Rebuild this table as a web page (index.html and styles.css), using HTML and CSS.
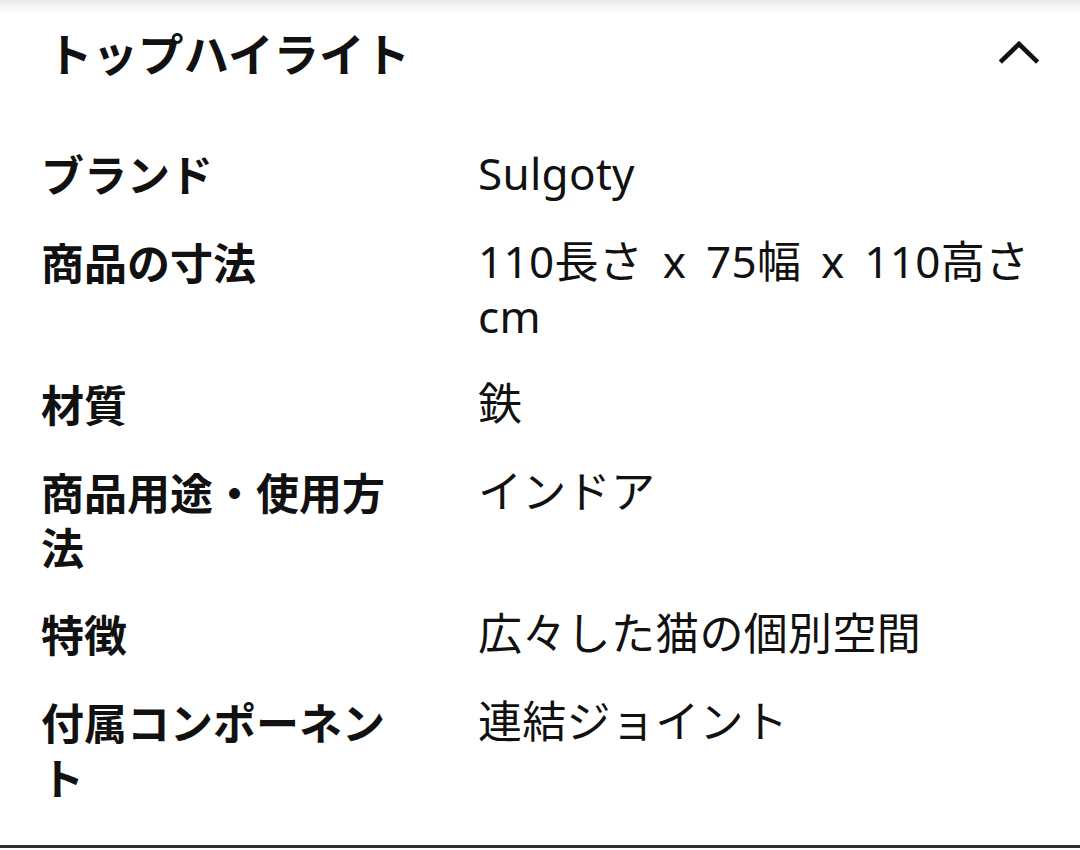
FILE: index.html
```html
<!DOCTYPE html>
<html lang="ja">
<head>
<meta charset="utf-8">
<link rel="stylesheet" href="styles.css">
</head>
<body>
<section class="panel">
  <header class="panel-head">
    <h2 class="panel-title">トップハイライト</h2>
    <svg class="chevron" width="40" height="24" viewBox="0 0 40 24" aria-hidden="true">
      <polyline points="3,19.5 20,3 37,19.5" fill="none" stroke="#111" stroke-width="4.6" stroke-linecap="square" stroke-linejoin="miter"/>
    </svg>
  </header>
  <dl class="specs">
    <dt>ブランド</dt><dd>Sulgoty</dd>
    <dt>商品の寸法</dt><dd>110長さ x 75幅 x 110高さ cm</dd>
    <dt>材質</dt><dd>鉄</dd>
    <dt>商品用途・使用方法</dt><dd>インドア</dd>
    <dt>特徴</dt><dd>広々した猫の個別空間</dd>
    <dt>付属コンポーネント</dt><dd>連結ジョイント</dd>
  </dl>
</section>
</body>
</html>
```

FILE: styles.css
```css
html, body {
  margin: 0;
  padding: 0;
  background: #fff;
}
body {
  width: 1080px;
  height: 850px;
  overflow: hidden;
  font-family: "Noto Sans", "Noto Sans CJK JP", sans-serif;
  color: #111;
  background: linear-gradient(#e8e8e8 0, #f4f4f4 6px, #fcfcfc 12px, #fff 16px);
}
.panel {
  padding: 0 42px 41px 41px;
  border-bottom: 3px solid #2f2f2f;
}
.panel-head {
  height: 106px;
  display: flex;
  align-items: center;
  justify-content: space-between;
}
.panel-title {
  margin: 0 0 0 6px;
  font-family: "Noto Sans CJK JP", sans-serif;
  font-weight: 700;
  font-size: 45.5px;
  line-height: 1;
  letter-spacing: 0;
}
.chevron {
  display: block;
  margin-right: -1px;
  margin-top: 0;
}
.specs {
  margin: 40px 0 0;
  display: grid;
  grid-template-columns: 370px 1fr;
  column-gap: 67px;
  row-gap: 32.5px;
  font-size: 43px;
  line-height: 55px;
}
.specs dt {
  font-family: "Noto Sans CJK JP", sans-serif;
  font-weight: 700;
}
.specs dd {
  margin: 0;
  font-family: "Noto Sans", "Noto Sans CJK JP", sans-serif;
  font-weight: 400;
  font-size: 44px;
  word-spacing: 8px;
  letter-spacing: 0.3px;
}
```
